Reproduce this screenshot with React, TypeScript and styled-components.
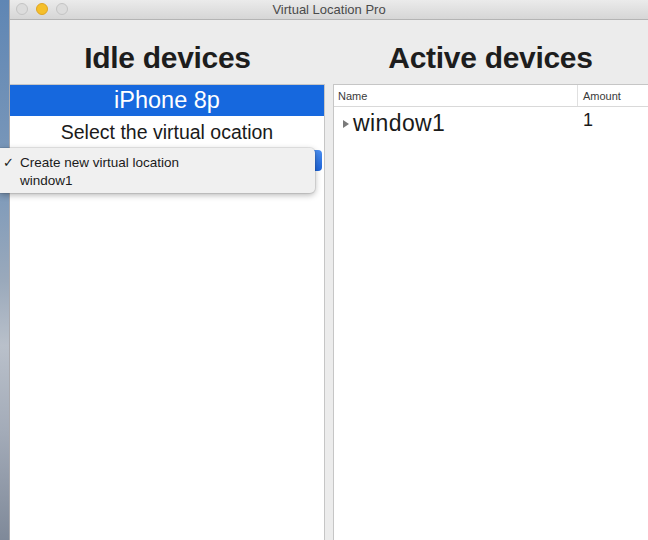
import React from 'react';
import styled, { createGlobalStyle } from 'styled-components';

const GlobalStyle = createGlobalStyle`
  html, body {
    margin: 0;
    padding: 0;
    width: 648px;
    height: 540px;
    overflow: hidden;
    font-family: 'Liberation Sans', Arial, sans-serif;
  }
`;

const Screen = styled.div`
  position: relative;
  width: 648px;
  height: 540px;
  display: flex;
  overflow: hidden;
`;

const Desktop = styled.div`
  width: 9px;
  flex-shrink: 0;
  background: linear-gradient(180deg, #5f86b4 0%, #7e9aba 35%, #9aa9bb 52%, #b9c0ca 64%, #a3abb8 80%, #7f8999 100%);
`;

const Window = styled.div`
  flex: 1;
  display: flex;
  flex-direction: column;
  background: #ececec;
  border-left: 1px solid #a9a9ad;
`;

const TitleBar = styled.div`
  position: relative;
  height: 19px;
  flex-shrink: 0;
  display: flex;
  align-items: center;
  justify-content: center;
  background: linear-gradient(180deg, #ebebeb 0%, #d6d6d6 100%);
  border-bottom: 1px solid #b4b4b4;
  font-size: 13px;
  color: #4a4a4a;
`;

const Lights = styled.div`
  position: absolute;
  left: 6px;
  top: 3px;
  display: flex;
  gap: 8px;
`;

const Light = styled.span<{ $color: string; $ring: string }>`
  width: 12px;
  height: 12px;
  border-radius: 50%;
  box-sizing: border-box;
  background: ${(p) => p.$color};
  border: 1px solid ${(p) => p.$ring};
`;

const Body = styled.div`
  flex: 1;
  display: flex;
  gap: 8px;
  min-height: 0;
`;

const Column = styled.div<{ $width: number }>`
  width: ${(p) => p.$width}px;
  flex-shrink: 0;
  display: flex;
  flex-direction: column;
`;

const Heading = styled.h1`
  margin: 0;
  height: 64px;
  display: flex;
  align-items: center;
  justify-content: center;
  font-size: 30px;
  font-weight: bold;
  color: #1d1d1d;
  letter-spacing: -0.3px;
  padding-top: 11px;
  box-sizing: border-box;
`;

const ListBox = styled.div`
  flex: 1;
  background: #ffffff;
  border: 1px solid #c6c6c6;
  border-left: none;
  border-bottom: none;
  display: flex;
  flex-direction: column;
`;

const DeviceRow = styled.div`
  height: 31px;
  display: flex;
  align-items: center;
  justify-content: center;
  background: #1668de;
  color: #ffffff;
  font-size: 23.5px;
`;

const Prompt = styled.div`
  height: 32px;
  display: flex;
  align-items: center;
  justify-content: center;
  font-size: 19.5px;
  color: #1a1a1a;
`;

const PopupRow = styled.div`
  height: 24px;
  display: flex;
  justify-content: flex-end;
  padding-right: 2px;
`;

const PopupArrow = styled.div`
  width: 10px;
  height: 21px;
  margin-top: 2px;
  border-radius: 0 4px 4px 0;
  background: linear-gradient(180deg, #4a8ef0 0%, #1c63d8 100%);
`;

const Menu = styled.div`
  position: absolute;
  left: 0;
  top: 148px;
  width: 315px;
  height: 45px;
  box-sizing: border-box;
  padding-top: 5px;
  background: #f0f0f0;
  border-radius: 0 5px 5px 0;
  box-shadow: 0 2px 6px rgba(0, 0, 0, 0.3), 0 0 0 1px rgba(0, 0, 0, 0.08);
  font-size: 13.5px;
  color: #1b1b1b;
`;

const MenuItem = styled.div`
  position: relative;
  height: 18px;
  display: flex;
  align-items: center;
  padding-left: 20px;
`;

const Check = styled.span`
  position: absolute;
  left: 3px;
  font-family: 'DejaVu Sans', sans-serif;
  font-size: 13px;
`;

const Table = styled.div`
  flex: 1;
  background: #ffffff;
  border: 1px solid #c6c6c6;
  border-right: none;
  border-bottom: none;
  display: flex;
  flex-direction: column;
`;

const HeaderRow = styled.div`
  height: 21px;
  display: grid;
  grid-template-columns: 243px 1fr;
  border-bottom: 1px solid #d9d9d9;
  font-size: 11px;
  color: #3a3a3a;
`;

const HeaderCell = styled.div<{ $divider?: boolean }>`
  display: flex;
  align-items: center;
  padding-left: ${(p) => (p.$divider ? 5 : 4)}px;
  border-left: ${(p) => (p.$divider ? '1px solid #e0e0e0' : 'none')};
`;

const DataRow = styled.div`
  height: 32px;
  display: grid;
  grid-template-columns: 244px 1fr;
  align-items: center;
  color: #1a1a1a;
`;

const NameCell = styled.div`
  display: flex;
  align-items: center;
  padding-left: 9px;
  font-size: 23px;
  letter-spacing: 0.4px;
`;

const Disclosure = styled.span`
  width: 0;
  height: 0;
  border-top: 4px solid transparent;
  border-bottom: 4px solid transparent;
  border-left: 6px solid #7a7a7a;
  margin-right: 4px;
  margin-top: 2px;
`;

const AmountCell = styled.div`
  padding-left: 5px;
  font-size: 18px;
  margin-top: -6px;
`;

export default function App() {
  return (
    <>
      <GlobalStyle />
      <Screen>
        <Desktop />
        <Window>
          <TitleBar>
            <Lights>
              <Light $color="#dcdcdc" $ring="#c4c4c4" />
              <Light $color="#f5bf2a" $ring="#dfa524" />
              <Light $color="#dcdcdc" $ring="#c4c4c4" />
            </Lights>
            Virtual Location Pro
          </TitleBar>
          <Body>
            <Column $width={315}>
              <Heading>Idle devices</Heading>
              <ListBox>
                <DeviceRow>iPhone 8p</DeviceRow>
                <Prompt>Select the virtual ocation</Prompt>
                <PopupRow>
                  <PopupArrow />
                </PopupRow>
              </ListBox>
            </Column>
            <Column $width={315}>
              <Heading>Active devices</Heading>
              <Table>
                <HeaderRow>
                  <HeaderCell>Name</HeaderCell>
                  <HeaderCell $divider>Amount</HeaderCell>
                </HeaderRow>
                <DataRow>
                  <NameCell>
                    <Disclosure />
                    window1
                  </NameCell>
                  <AmountCell>1</AmountCell>
                </DataRow>
              </Table>
            </Column>
          </Body>
        </Window>
        <Menu>
          <MenuItem>
            <Check>✓</Check>
            Create new virtual location
          </MenuItem>
          <MenuItem>window1</MenuItem>
        </Menu>
      </Screen>
    </>
  );
}
